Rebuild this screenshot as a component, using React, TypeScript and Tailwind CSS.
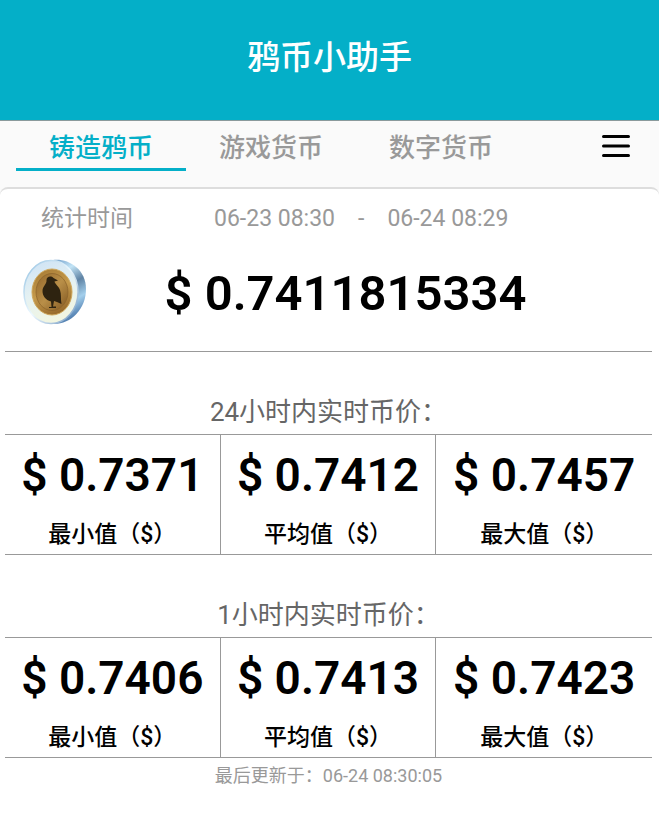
import React from "react";

const FONT = "font-['Roboto','Noto_Sans_CJK_SC',sans-serif]";

type Stat = { label: string; value: string };

const TABS = ["铸造鸦币", "游戏货币", "数字货币"];

const DAY: Stat[] = [
  { label: "最小值（$）", value: "$ 0.7371" },
  { label: "平均值（$）", value: "$ 0.7412" },
  { label: "最大值（$）", value: "$ 0.7457" },
];

const HOUR: Stat[] = [
  { label: "最小值（$）", value: "$ 0.7406" },
  { label: "平均值（$）", value: "$ 0.7413" },
  { label: "最大值（$）", value: "$ 0.7423" },
];

function Coin() {
  return (
    <svg viewBox="0 0 64 66" className="mb-1 h-[66px] w-16 shrink-0" role="img" aria-label="鸦币">
      <defs>
        <linearGradient id="edge" x1="0" y1="0" x2="0.3" y2="1">
          <stop offset="0" stopColor="#6f9cc8" />
          <stop offset="0.25" stopColor="#c3e4f6" />
          <stop offset="0.5" stopColor="#5f83a4" />
          <stop offset="0.75" stopColor="#a3cfec" />
          <stop offset="1" stopColor="#4f7cae" />
        </linearGradient>
        <linearGradient id="face" x1="0.3" y1="0" x2="0.6" y2="1">
          <stop offset="0" stopColor="#d0e4f5" />
          <stop offset="0.5" stopColor="#e6f2f2" />
          <stop offset="1" stopColor="#f3f6df" />
        </linearGradient>
        <linearGradient id="rim" x1="0" y1="0" x2="1" y2="1">
          <stop offset="0" stopColor="#8fbfe0" />
          <stop offset="0.5" stopColor="#eef9ff" />
          <stop offset="1" stopColor="#6c94be" />
        </linearGradient>
        <linearGradient id="gold" x1="0.2" y1="0" x2="0.6" y2="1">
          <stop offset="0" stopColor="#a87c35" />
          <stop offset="0.5" stopColor="#c59a4c" />
          <stop offset="1" stopColor="#96692a" />
        </linearGradient>
        <linearGradient id="field" x1="0" y1="0" x2="1" y2="1">
          <stop offset="0" stopColor="#94672a" />
          <stop offset="0.5" stopColor="#b98f48" />
          <stop offset="1" stopColor="#805620" />
        </linearGradient>
      </defs>
      <path d="M30 1C44-1 63 9 63 30C63 50 48 65 31 65Z" fill="url(#edge)" />
      <ellipse cx="28" cy="33" rx="27" ry="31.500" fill="url(#face)" stroke="url(#rim)" strokeWidth="1.500" />
      <ellipse cx="29" cy="33" rx="20" ry="23" fill="url(#gold)" stroke="#cfa75a" strokeWidth="1" />
      <ellipse cx="29" cy="33" rx="16" ry="18.500" fill="url(#field)" stroke="#8a6129" strokeWidth="0.700" />
      <path
        d="M23.500 21C23.500 17.500 28 16.500 30.500 19L35 21.500L31.500 22.500C32 25 35.500 27 37 31C38.500 35 37.500 40 38.500 45L34 43L31 42L30 47.500H33V49H26V48H28.500L28 42.500C22.500 41 19.500 37 19.500 32C19.500 27 24 25 23.500 21Z"
        fill="#2e2310"
      />
    </svg>
  );
}

function PriceBlock({ title, stats }: { title: string; stats: Stat[] }) {
  return (
    <section className="mt-10">
      <h2 className="text-center text-[26px] leading-10 text-[#666]">{title}</h2>
      <dl className="mt-0.5 grid grid-cols-3 divide-x divide-[#999] border-y border-[#999]">
        {stats.map((s) => (
          <div key={s.label} className="flex h-[119px] flex-col-reverse justify-end text-center">
            <dt className="text-[23px] leading-10 font-medium text-black">{s.label}</dt>
            <dd className="text-[46px] leading-[80px] font-semibold whitespace-nowrap text-black">{s.value}</dd>
          </div>
        ))}
      </dl>
    </section>
  );
}

export default function App() {
  return (
    <div className={`min-h-screen bg-white ${FONT}`}>
      <header className="flex h-[121px] items-center justify-center border-b border-[#8a9a9c] bg-[#04afc8] pb-1">
        <h1 className="text-[33px] leading-10 font-medium text-white">鸦币小助手</h1>
      </header>

      <div className="bg-[#fafafa]">
        <nav className="flex h-[66px] items-start justify-between pr-[27px] pl-4">
          <div className="flex">
            {TABS.map((t, i) => (
              <button
                key={t}
                type="button"
                className={
                  "h-[50px] w-[170px] border-b-3 pt-1.5 text-[26px] leading-10 font-medium " +
                  (i === 0 ? "border-[#04afc8] text-[#04afc8]" : "border-transparent text-[#999]")
                }
              >
                {t}
              </button>
            ))}
          </div>
          <button type="button" aria-label="菜单" className="mt-3 h-7 w-8">
            <svg viewBox="0 0 32 28" className="h-7 w-8" stroke="#000" strokeWidth="3" strokeLinecap="round">
              <path d="M3.500 3.500H28.500M3.500 13H28.500M3.500 22.500H28.500" />
            </svg>
          </button>
        </nav>

        <main className="rounded-t-lg border-t-2 border-[#ddd] bg-white pr-[7px] pl-[5px]">
          <div className="flex pt-2 pl-9 text-[23px] leading-11 text-[#999]">
            <span className="w-[173px]">统计时间</span>
            <span>06-23 08:30</span>
            <span className="mx-[23px]">-</span>
            <span>06-24 08:29</span>
          </div>

          <div className="flex h-[111px] items-center border-b border-[#999] pr-12 pb-1 pl-[18px]">
            <Coin />
            <p className="flex-1 text-center text-[49px] leading-[60px] font-semibold text-black">$ 0.7411815334</p>
          </div>

          <PriceBlock title="24小时内实时币价：" stats={DAY} />
          <PriceBlock title="1小时内实时币价：" stats={HOUR} />

          <p className="text-center text-[18px] leading-9 text-[#999]">最后更新于：06-24 08:30:05</p>
        </main>
      </div>
    </div>
  );
}
